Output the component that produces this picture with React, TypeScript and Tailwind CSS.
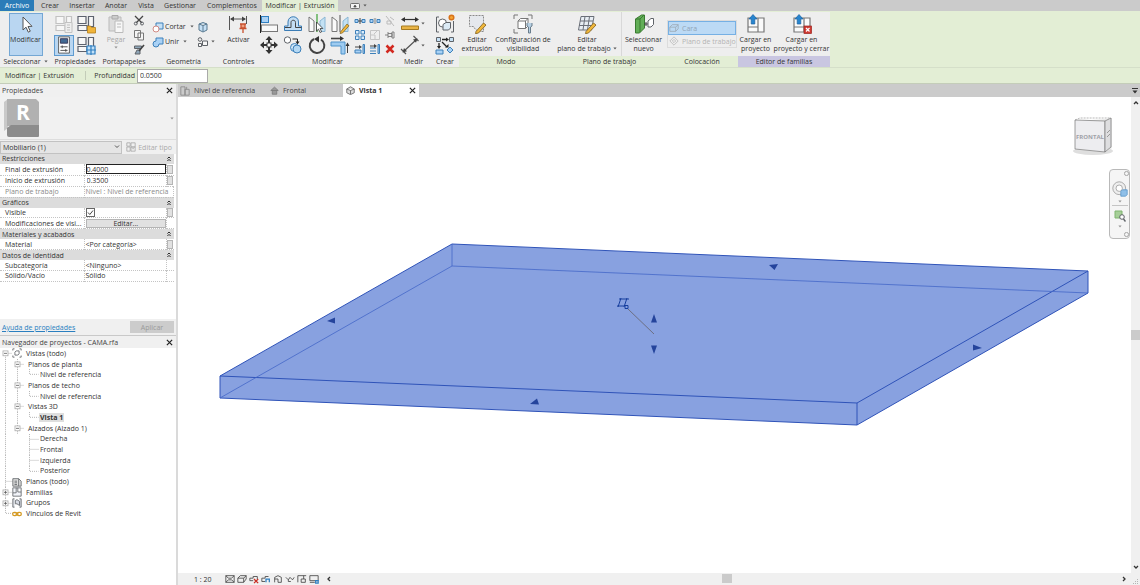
import { ReactNode } from "react";
import clsx from "clsx";

type Props = {
  children?: ReactNode;
  className?: string;
};

/* ---------- shared bits ---------- */

function Big({ children, className = "size-5" }: Props) {
  return (
    <svg viewBox="0 0 20 20" className={clsx("shrink-0", className)} fill="none" stroke="#5f6368">
      {children}
    </svg>
  );
}

function Small({ children, className = "size-3" }: Props) {
  return (
    <svg viewBox="0 0 12 12" className={clsx("shrink-0", className)} fill="none" stroke="#5f6368">
      {children}
    </svg>
  );
}

function Caret({ className }: { className?: string }) {
  return (
    <svg viewBox="0 0 5 3" className={clsx("h-[3px] w-[4px] shrink-0", className)} fill="#555">
      <path d="M0.5 0.3h4L2.5 2.8z" />
    </svg>
  );
}

function Close({ label }: { label: string }) {
  return (
    <button aria-label={label} className="flex size-[9px] items-center justify-center">
      <svg viewBox="0 0 8 8" className="size-[7px]" stroke="#222" strokeWidth="1.4">
        <path d="M1 1l6 6M7 1L1 7" />
      </svg>
    </button>
  );
}

function IconButton({ label, children, className }: Props & { label: string }) {
  return (
    <button aria-label={label} className={clsx("flex items-center justify-center", className)}>
      {children}
    </button>
  );
}

function LabelButton({ children, icon, className }: Props & { icon: ReactNode }) {
  return (
    <button className={clsx("flex flex-col items-center pt-[2px] leading-[9px] whitespace-nowrap", className)}>
      <span className="mb-[1px]">{icon}</span>
      {children}
    </button>
  );
}

function Panel({
  title,
  width,
  tone = "bg-[#eeeeee]",
  children,
  arrow,
}: {
  title: string;
  width: string;
  tone?: string;
  children: ReactNode;
  arrow?: boolean;
}) {
  return (
    <section aria-label={title} className={clsx("flex shrink-0 flex-col bg-[#eeeeee]", width)}>
      <div className="flex h-[45px] justify-center">{children}</div>
      <h2 className={clsx("flex h-[11px] items-center justify-center gap-[3px] whitespace-nowrap", tone)}>
        {title}
        {arrow ? <Caret /> : null}
      </h2>
    </section>
  );
}

/* ---------- ribbon ---------- */

const tabs = [
  { name: "Crear", width: "w-8" },
  { name: "Insertar", width: "w-8" },
  { name: "Anotar", width: "w-9" },
  { name: "Vista", width: "w-6" },
  { name: "Gestionar", width: "w-11" },
  { name: "Complementos", width: "w-[60px]" },
];

function TabBar() {
  return (
    <nav className="flex h-[11px] bg-[#cbcbcb]">
      <button className="w-[34px] bg-[#2b7cb8] text-white">Archivo</button>
      {tabs.map((tab) => (
        <button key={tab.name} className={clsx("whitespace-nowrap", tab.width)}>
          {tab.name}
        </button>
      ))}
      <button className="w-[76px] bg-[#e3eed5] whitespace-nowrap">Modificar | Extrusión</button>
      <button aria-label="Minimizar cinta" className="ml-3 flex items-center gap-[3px]">
        <svg viewBox="0 0 10 6" className="h-[6px] w-[10px]" fill="#f4f4f4" stroke="#555" strokeWidth="0.8">
          <rect x="0.5" y="0.5" width="9" height="5" rx="1" />
          <path d="M3.8 4L5 2l1.2 2z" fill="#333" />
        </svg>
        <Caret />
      </button>
    </nav>
  );
}

function AlignIcon() {
  return (
    <Big>
      <path d="M1.5 1v18" stroke="#222" />
      <rect x="2.5" y="2.5" width="7" height="6" fill="#a9d1f5" stroke="#2f7fc1" />
      <rect x="2.5" y="11" width="16" height="6.5" fill="#f8f8f8" stroke="#777" />
    </Big>
  );
}

function OffsetIcon() {
  return (
    <Big>
      <path d="M1.500 16.500h17v-4.500h-3V8c0-7-10.500-7-10.500 0v4H1.500z" fill="#c3def5" stroke="#3b7cb5" />
      <path d="M2 13.500h6V8.500c0-3 4.500-3 4.500 0v5h6" stroke="#444" />
    </Big>
  );
}

function MirrorIcon({ pencil }: { pencil?: boolean }) {
  return (
    <Big>
      <path d="M2 3l5 4v10.500H2z" fill="#fafafa" stroke="#777" />
      <path d="M18 3l-5 4v10.500h5z" fill="#c3e1f3" stroke="#8ab6d4" />
      {pencil ? (
        <>
          <path d="M10 1v17" stroke="#555" />
          <path d="M10.500 18l6.500-8 2 1.800-6.500 7.200-2.500.500z" fill="#f0b73b" stroke="#7d5d1c" strokeWidth=".7" />
        </>
      ) : (
        <>
          <path d="M10 0v18" stroke="#49a843" strokeWidth="1.300" />
          <path d="M9.500 8v9l2-1.800 1.600 3.300 1.500-.700-1.500-3.300h2.800z" fill="#fff" stroke="#333" strokeWidth=".8" />
        </>
      )}
    </Big>
  );
}

function MoveIcon() {
  return (
    <Big>
      <path
        d="M10 1l3.500 4H11v4h4V6.500l4 3.500-4 3.500V11h-4v4h2.500L10 19l-3.500-4H9v-4H5v2.500L1 10l4-3.500V9h4V5H6.500z"
        fill="#333"
        stroke="none"
      />
      <rect x="8" y="8" width="4" height="4" fill="#fff" stroke="#333" />
    </Big>
  );
}

function CopyIcon() {
  return (
    <Big>
      <circle cx="4.500" cy="5" r="3.200" fill="#fff" />
      <path d="M9.500 4h5v3" stroke="#222" />
      <path d="M12.500 6.500h4l-2 3z" fill="#222" stroke="none" />
      <circle cx="11.500" cy="12.500" r="4" fill="#cfe5f7" stroke="#3d80ba" />
      <circle cx="14" cy="14" r="4" fill="#b4d8f4" stroke="#3d80ba" />
    </Big>
  );
}

function RotateIcon() {
  return (
    <Big>
      <path d="M7 4a7.300 7.300 0 1 0 7 .500" stroke="#444" strokeWidth="2" />
      <path d="M12 1l-5 3 5 3.500z" fill="#333" stroke="none" />
    </Big>
  );
}

function TrimIcon() {
  return (
    <Big>
      <path d="M1 3.500h10" stroke="#444" strokeWidth="1.600" />
      <path d="M10 1l4 2.500-4 2.500z" fill="#333" stroke="none" />
      <path d="M1 7h14v12h-4v-8H1z" fill="#9ecbf0" stroke="#4d92ca" />
      <path d="M17.500 18v-8" stroke="#444" />
      <path d="M15.500 11l2-3.500 2 3.500z" fill="#333" stroke="none" />
    </Big>
  );
}

const smallTools = [
  {
    label: "Dividir elemento",
    art: (
      <>
        <path d="M1 4.500h3v3H1zM8 4.500h3v3H8z" fill="#a9d1f5" stroke="#3d80ba" />
        <path d="M4 6h4M6 3v6" stroke="#444" />
      </>
    ),
  },
  {
    label: "Dividir con separación",
    art: (
      <>
        <path d="M1 4.500h3v3H1zM8 4.500h3v3H8z" fill="#a9d1f5" stroke="#3d80ba" />
        <path d="M5.300 3v6M6.700 3v6" stroke="#888" strokeWidth=".7" />
      </>
    ),
  },
  {
    label: "Desbloquear",
    art: <path d="M2 1l8 10M3 6h4v3H3zM6 2l4 3" stroke="#bbb" />,
  },
  {
    label: "Matriz",
    art: (
      <path d="M1.500 1.500h3.500v3.500H1.500zM7 1.500h3.500v3.500H7zM1.500 7h3.500v3.500H1.500zM7 7h3.500v3.500H7z" fill="#dceefc" stroke="#3d80ba" />
    ),
  },
  {
    label: "Escala",
    art: <path d="M1.500 1.500h9v9h-9zM1.500 6h4.500v4.500M5 5l3-3" stroke="#c4c4c4" />,
  },
  {
    label: "Bloquear",
    art: <path d="M1 6h3M4 3v6M4 4.500h4v3H4M8 3v6h2V3z" stroke="#777" strokeWidth=".9" />,
  },
  {
    label: "Recortar un elemento",
    art: (
      <>
        <path d="M1 7h6v3H1zM9 1.500h1.500v9H9z" fill="#a9d1f5" stroke="#3d80ba" />
        <path d="M1 4h5" stroke="#444" />
        <path d="M5 2l3 2-3 2z" fill="#444" stroke="none" />
      </>
    ),
  },
  {
    label: "Recortar varios elementos",
    art: (
      <>
        <path d="M1 5h6M1 8h6M1 10.500h6M9 1.500h1.500v9H9z" fill="#a9d1f5" stroke="#3d80ba" />
        <path d="M1 3h5" stroke="#444" />
        <path d="M5 1l3 2-3 2z" fill="#444" stroke="none" />
      </>
    ),
  },
  {
    label: "Suprimir",
    art: <path d="M2.500 2.500l7 7M9.500 2.500l-7 7" stroke="#d2281f" strokeWidth="2.500" />,
  },
];

function ModifyPanel() {
  return (
    <Panel title="Modificar" width="w-[137px]">
      <div className="grid grid-cols-4 grid-rows-2 gap-x-1 pt-[1px]">
        <IconButton label="Alinear"><AlignIcon /></IconButton>
        <IconButton label="Desfase"><OffsetIcon /></IconButton>
        <IconButton label="Reflejar - Seleccionar eje"><MirrorIcon /></IconButton>
        <IconButton label="Reflejar - Dibujar eje"><MirrorIcon pencil /></IconButton>
        <IconButton label="Desplazar"><MoveIcon /></IconButton>
        <IconButton label="Copiar"><CopyIcon /></IconButton>
        <IconButton label="Rotar"><RotateIcon /></IconButton>
        <IconButton label="Recortar"><TrimIcon /></IconButton>
      </div>
      <div className="ml-1 grid grid-cols-3 grid-rows-3 gap-x-[3px] pt-[2px]">
        {smallTools.map((tool) => (
          <IconButton key={tool.label} label={tool.label}>
            <Small>{tool.art}</Small>
          </IconButton>
        ))}
      </div>
    </Panel>
  );
}

function FamilyTypesIcon({ variant }: { variant: "gray" | "folder" | "globe" }) {
  const line = variant === "gray" ? "#c2c2c2" : "#5d626e";
  return (
    <Big>
      <path d="M2 2.500h8v7H2zM12.500 2.500h5v10h-5zM2 11.500h9v5H2z" fill="#f7f7f7" stroke={line} strokeWidth="1.200" />
      {variant === "gray" && <path d="M11 8.500h7v10h-7zM13 11h3M13 13.500h3M13 16h3" fill="#eee" stroke={line} />}
      {variant === "folder" && <path d="M11.500 12h3l1 1.500h4v5.500h-8z" fill="#f0b43a" stroke="#b47f1a" strokeWidth=".8" />}
      {variant === "globe" && (
        <path d="M11 11h8v8h-8zM15 10v10M10 15h10" fill="#c2e0f7" stroke="#2f7fc1" strokeWidth="1.200" />
      )}
    </Big>
  );
}

function PencilPath() {
  return <path d="M9 17.500l7.500-8.500 2.500 2-7.500 8-3 .700z" fill="#f0b73b" stroke="#7d5d1c" strokeWidth=".8" />;
}

function LoadIcon({ close }: { close?: boolean }) {
  return (
    <Big>
      <path d="M2 4h16v14H2z" fill="#fafafa" stroke="#777" strokeWidth="1.200" />
      <path d="M12 4v9H2M12 13v5" stroke="#777" strokeWidth="1.200" />
      <path d="M7 0.500l4 4.500H8.800v5H5.200V5H3z" fill="#2785cf" stroke="#1b62a0" strokeWidth=".7" />
      {close && (
        <>
          <rect x="12" y="12" width="7.500" height="7.500" fill="#cf3a32" stroke="#9a221c" strokeWidth=".7" />
          <path d="M14 14l3.500 3.500M17.500 14L14 17.500" stroke="#fff" strokeWidth="1.200" />
        </>
      )}
    </Big>
  );
}

function Ribbon() {
  return (
    <div className="flex h-[57px] border-b border-[#d5dfc9] bg-[#e3eed5] pt-[1px]">
      <Panel title="Seleccionar" width="w-[51px]" arrow>
        <button className="mt-[1px] flex h-[43px] w-[34px] flex-col items-center border border-[#74a7d4] bg-[#b9d6f1]">
          <Big className="mt-[1px] size-[20px]">
            <path d="M7 2v13l3-2.800 2.300 5 2-1-2.300-4.700 4-.200z" fill="#fff" stroke="#555" />
          </Big>
          Modificar
        </button>
      </Panel>
      <Panel title="Propiedades" width="w-12">
        <div className="grid grid-cols-2 grid-rows-2 gap-x-[2px] pt-[1px]">
          <IconButton label="Categorías"><FamilyTypesIcon variant="gray" /></IconButton>
          <IconButton label="Tipos de familia"><FamilyTypesIcon variant="folder" /></IconButton>
          <IconButton label="Propiedades" className="border border-[#5f9bd0] bg-[#b9d6f1]">
            <Big className="size-[18px]">
              <path d="M4 1h12v18H4z" fill="#fff" stroke="#555" />
              <path d="M6 3h8v5H6z" fill="#426a94" stroke="#335" />
              <path d="M6 12h8M6 16h8M8 10.500v3M12 14.500v3" stroke="#444" />
            </Big>
          </IconButton>
          <IconButton label="Parámetros"><FamilyTypesIcon variant="globe" /></IconButton>
        </div>
      </Panel>
      <Panel title="Portapapeles" width="w-[50px]">
        <LabelButton
          className="w-[26px] text-[#a6a6a6]"
          icon={
            <Big>
              <path d="M3 3h12v14H3z" fill="#ddd" stroke="#bbb" />
              <path d="M6 1.500h6v3.500H6z" fill="#ccc" stroke="#aaa" />
              <path d="M9 7h8v11.500H9zM11 10h4M11 13h4" fill="#f7f7f7" stroke="#bbb" />
            </Big>
          }
        >
          Pegar
          <Caret className="mt-[2px] opacity-60" />
        </LabelButton>
        <div className="grid grid-rows-3 pt-[1px] pl-1">
          <IconButton label="Cortar al portapapeles">
            <Small>
              <path d="M2 2l7 7M10 2L3 9" stroke="#444" strokeWidth="1.300" />
              <circle cx="2.800" cy="9.500" r="1.500" />
              <circle cx="9" cy="9.500" r="1.500" />
            </Small>
          </IconButton>
          <IconButton label="Copiar al portapapeles">
            <Small>
              <path d="M1.500 1.500h6v7h-6zM5 4h5.500v7H5z" fill="#f4f4f4" stroke="#777" />
            </Small>
          </IconButton>
          <IconButton label="Igualar tipo">
            <Small>
              <path d="M1.500 3h7v2.500h-7zM4 7h3v4H2z" fill="#8fa6b8" />
              <path d="M11 2L6 8" stroke="#444" strokeWidth="1.600" />
            </Small>
          </IconButton>
        </div>
      </Panel>
      <Panel title="Geometría" width="w-[69px]">
        <div className="mt-[7px] grid h-[30px] grid-cols-[45px_18px] grid-rows-2 self-start">
          <button className="flex items-center gap-px">
            <Small>
              <path d="M4 2h7v6H4z" fill="#c5e0f5" stroke="#3d80ba" />
              <circle cx="4" cy="8" r="3" fill="#fff" stroke="#d18a83" />
            </Small>
            Cortar
            <Caret className="ml-[3px]" />
          </button>
          <button aria-label="Desmoldear" className="flex items-center">
            <Small>
              <path d="M2 3l4-1.500 4 1.500v6l-4 2-4-2zM6 4.500v6M2 3l4 1.500L10 3" fill="#c5e0f5" stroke="#58788f" />
            </Small>
          </button>
          <button className="flex items-center gap-px">
            <Small>
              <path d="M4 2h7v6H7a3 3 0 1 1-3-3z" fill="#a9d1f5" stroke="#3d80ba" />
            </Small>
            Unir
            <Caret className="ml-[3px]" />
          </button>
          <button aria-label="Pintura" className="flex items-center">
            <Small>
              <circle cx="3" cy="3.500" r="1.800" />
              <path d="M5.500 5h5v4.500h-5zM1.500 7.500h3v3h-3z" fill="#f7f7f7" />
            </Small>
            <Caret className="ml-[2px]" />
          </button>
        </div>
      </Panel>
      <Panel title="Controles" width="w-[41px]">
        <LabelButton
          icon={
            <Big>
              <path d="M1.500 2v14M18.500 2v8M3 5h14" stroke="#555" />
              <path d="M6 2.500L2 5l4 2.500zM14 2.500L18 5l-4 2.500z" fill="#444" stroke="none" />
              <path d="M12 10h6M13 10v4h4v-4M11.500 14.500h7M15 15v4" fill="#f0a080" stroke="#c8502e" strokeWidth="1.300" />
            </Big>
          }
        >
          Activar
        </LabelButton>
      </Panel>
      <ModifyPanel />
      <Panel title="Medir" width="w-[35px]">
        <div className="grid grid-cols-[22px_7px] grid-rows-2 items-center pt-[1px]">
          <IconButton label="Medir">
            <Big>
              <path d="M2 5.500h16" stroke="#333" strokeWidth="1.200" />
              <path d="M5 3L1 5.500 5 8zM15 3l4 2.500L15 8z" fill="#333" stroke="none" />
              <path d="M1.500 12h17v3.500h-17z" fill="#e9b445" stroke="#a57a20" />
            </Big>
          </IconButton>
          <Caret />
          <IconButton label="Cota alineada">
            <Big>
              <path d="M3 17L17 4M1 14l5 5M13.500 1l5 5" stroke="#555" strokeWidth="1.200" />
              <path d="M2.500 17.500l1.500-4.500 3 3.300zM17.500 3.500l-4.500 1 3 3.300z" fill="#444" stroke="none" />
            </Big>
          </IconButton>
          <Caret />
        </div>
      </Panel>
      <Panel title="Crear" width="w-7">
        <div className="grid grid-rows-2 pt-[1px]">
          <IconButton label="Crear grupo">
            <Big>
              <path d="M4 3H1.500v15H4M16 18h2.500V7" />
              <circle cx="7.500" cy="9" r="4" fill="#fff" />
              <path d="M8 10.500l3-2h4.500v5.500l-2 2H8z" fill="#dcebf6" />
              <circle cx="16.500" cy="3.500" r="2.300" fill="#f3a534" stroke="#d87219" strokeWidth="1.500" />
            </Big>
          </IconButton>
          <IconButton label="Crear similar">
            <Big>
              <path d="M1.500 2.500h4v4h-4zM14.500 2.500h4v4h-4z" fill="#c5e0f5" />
              <path d="M7 4.500h5M4 8v4M7 7l5 5" stroke="#222" strokeWidth="1.300" />
              <path d="M11 2.500l3 2-3 2zM2 11h4l-2 3zM10 12.500h3.500V9z" fill="#222" stroke="none" />
              <path d="M1 15h7v4H1zM15 12l3 3-3 3-3-3z" fill="#a9d1f5" stroke="#3d80ba" />
            </Big>
          </IconButton>
        </div>
      </Panel>
      <Panel title="Modo" width="w-[94px]" tone="bg-[#e3eed5]">
        <LabelButton
          className="w-[34px]"
          icon={
            <Big>
              <path d="M2.500 1.500h14v16h-5l-3-2-2-3h-4z" fill="#e5e8ed" stroke="#8a8a8a" strokeDasharray="2 1" />
              <PencilPath />
            </Big>
          }
        >
          <span>Editar</span>
          <span>extrusión</span>
        </LabelButton>
        <LabelButton
          className="w-[58px]"
          icon={
            <Big>
              <path d="M1 5V1h4M15 1h4v4M1 15v4h4" stroke="#777" />
              <path d="M5 7l2.500-2.500H15V12l-2.500 2.500H5zM5 7h7.500v7.500M12.500 7L15 4.500" fill="#fff" stroke="#777" />
              <path d="M14 9v3l1.500 1V19h2v-6L19 12V9" fill="#b7d0e3" stroke="#687c8b" />
            </Big>
          }
        >
          <span>Configuración de</span>
          <span>visibilidad</span>
        </LabelButton>
      </Panel>
      <Panel title="Plano de trabajo" width="w-[113px]" tone="bg-[#e3eed5]">
        <LabelButton
          className="w-[68px] border-r border-[#d8d8d8]"
          icon={
            <Big>
              <path d="M4 2.500h13L14.500 16H1.500zM8 2.500L6 16M12.500 2.500l-2 13.500M3 7h13M2 11.500h13" fill="#e8eef4" stroke="#6a6f78" />
              <PencilPath />
            </Big>
          }
        >
          <span>Editar</span>
          <span className="flex items-center gap-[2px]">
            plano de trabajo
            <Caret />
          </span>
        </LabelButton>
        <LabelButton
          className="w-11"
          icon={
            <Big>
              <path d="M1.500 5l6-4h3v13l-5 5h-4zM1.500 5h4.500v13M6 5l4-4" fill="#62ae57" stroke="#397b31" />
              <path d="M10 10h4M12 8v4" stroke="#444" />
              <path d="M14 7l3-2.500h2.500v6L17 13h-3z" fill="#fff" />
            </Big>
          }
        >
          <span>Seleccionar</span>
          <span>nuevo</span>
        </LabelButton>
      </Panel>
      <Panel title="Colocación" width="w-[72px]" tone="bg-[#e3eed5]">
        <div className="mt-[8px] flex h-[28px] w-[70px] flex-col border border-[#dcdcdc] text-[#b4b4b4]">
          <button className="flex flex-1 items-center gap-[3px] border border-[#76b0e4] bg-[#bcdaf5] text-[#91a4b5]">
            <Small className="size-[10px]">
              <path d="M1 5l3-3h7v5l-3 3H1zM1 5h7v5M8 5l3-3" stroke="#9caab6" />
            </Small>
            Cara
          </button>
          <button className="flex flex-1 items-center gap-[3px] pl-px whitespace-nowrap">
            <Small className="size-[10px]">
              <path d="M6 1l5 5-5 5-5-5zM6 4l2 2-2 2-2-2z" stroke="#bbb" />
            </Small>
            Plano de trabajo
          </button>
        </div>
      </Panel>
      <Panel title="Editor de familias" width="w-[92px]" tone="bg-[#c9c6e1]">
        <LabelButton className="w-[35px]" icon={<LoadIcon />}>
          <span>Cargar en</span>
          <span>proyecto</span>
        </LabelButton>
        <LabelButton className="w-[57px]" icon={<LoadIcon close />}>
          <span>Cargar en</span>
          <span>proyecto y cerrar</span>
        </LabelButton>
      </Panel>
    </div>
  );
}

function OptionsBar() {
  return (
    <div className="flex h-4 items-center border-b border-[#c4cdb9] bg-[#e3eed5]">
      <span className="w-[86px] border-r border-[#c3ccb8] pl-[5px]">Modificar | Extrusión</span>
      <label htmlFor="depth" className="w-[51px] pr-[2px] text-right">
        Profundidad
      </label>
      <input id="depth" defaultValue="0.0500" className="h-[14px] w-[71px] border border-[#aaa] bg-white px-[2px]" />
    </div>
  );
}

/* ---------- properties palette ---------- */

function GroupRow({ name }: { name: string }) {
  return (
    <tr className="bg-[#dcdcdc]">
      <th colSpan={3} scope="rowgroup" className="p-0 pl-[2px] text-left font-normal">
        <div className="flex items-center justify-between pr-[3px]">
          {name}
          <svg viewBox="0 0 5 7" className="h-[6px] w-[4px]" fill="none" stroke="#222" strokeWidth="1.200">
            <path d="M0.500 3L2.500 1l2 2M0.500 6l2-2 2 2" />
          </svg>
        </div>
      </th>
    </tr>
  );
}

function PropRow({ name, children, more, muted }: Props & { name: string; more?: boolean; muted?: boolean }) {
  return (
    <tr className={clsx("border-b border-dotted border-[#c4c4c4]", muted && "text-[#8a8a8a]")}>
      <th scope="row" className="border-r border-dotted border-[#c4c4c4] p-0 pl-[5px] text-left font-normal">
        {name}
      </th>
      <td colSpan={muted ? 2 : 1} className="border-r border-dotted border-[#c4c4c4] p-0 pl-px whitespace-nowrap">
        {children}
      </td>
      {muted ? null : (
        <td className="p-0">
          {more ? <button aria-label={"Asociar " + name} className="block h-[9px] w-[6px] border border-[#b5b5b5] bg-[#e1e1e1]" /> : null}
        </td>
      )}
    </tr>
  );
}

function PropertiesPalette() {
  return (
    <section aria-label="Propiedades" className="bg-[#f0f0f0]">
      <header className="flex h-[13px] items-center justify-between px-[2px] text-[#444]">
        Propiedades
        <Close label="Cerrar propiedades" />
      </header>
      <div className="flex h-[43px] items-center justify-between border-b border-[#ddd] bg-[#f1f1f1] pr-[2px] pl-1">
        <svg viewBox="0 0 36 40" className="h-10 w-9">
          <path d="M0 4L4 1v29l-4 3z" fill="#c9c9c9" />
          <path d="M3 1h29l3 3v24H3z" fill="#b1b1b1" />
          <path d="M3 30l4-3h28v11a1 1 0 0 1-1 1H5a2 2 0 0 1-2-2z" fill="#8c8c8c" />
          <text x="19" y="22" textAnchor="middle" fontSize="21" fontWeight="700" fill="#fff">
            R
          </text>
        </svg>
        <Caret className="opacity-60" />
      </div>
      <div className="flex h-[14px] items-center justify-between pr-[4px]">
        <div className="relative flex items-center">
          <select aria-label="Filtro" className="h-[13px] w-[122px] appearance-none border border-[#c2c2c2] bg-[#e5e5e5] pl-[2px]">
            <option>Mobiliario (1)</option>
          </select>
          <svg viewBox="0 0 6 4" className="pointer-events-none absolute right-[2px] h-1 w-[6px]" fill="none" stroke="#555">
            <path d="M1 0.500l2 2 2-2" />
          </svg>
        </div>
        <button className="flex items-center gap-[2px] whitespace-nowrap text-[#aaa]">
          <Small className="size-[10px]">
            <path d="M1 1h4v4H1zM6 1h5v5H6zM1 6h4v5H1zM6 6h5v5H6zM7.500 8h2" stroke="#aaa" />
          </Small>
          Editar tipo
        </button>
      </div>
      <div className="h-[165px] bg-white pr-[2px]">
        <table className="h-[128px] w-full table-fixed border-collapse leading-[9px]">
          <colgroup>
            <col className="w-[84px]" />
            <col />
            <col className="w-[7px]" />
          </colgroup>
          <tbody>
            <GroupRow name="Restricciones" />
            <PropRow name="Final de extrusión" more>
              <input aria-label="Final de extrusión" defaultValue="0.4000" className="block h-[10px] w-full border border-[#222] leading-[8px]" />
            </PropRow>
            <PropRow name="Inicio de extrusión" more>
              <input aria-label="Inicio de extrusión" defaultValue="0.3500" className="block h-[9px] w-full pl-px" />
            </PropRow>
            <PropRow name="Plano de trabajo" muted>
              Nivel : Nivel de referencia
            </PropRow>
            <GroupRow name="Gráficos" />
            <PropRow name="Visible" more>
              <label className="relative flex h-[9px] w-[9px] items-center">
                <input type="checkbox" defaultChecked aria-label="Visible" className="peer size-[9px] appearance-none border border-[#666] bg-white" />
                <svg viewBox="0 0 9 9" className="pointer-events-none absolute size-[9px] opacity-0 peer-checked:opacity-100" fill="none" stroke="#444">
                  <path d="M2 4.500l1.800 2L7 2.500" />
                </svg>
              </label>
            </PropRow>
            <PropRow name="Modificaciones de visi...">
              <button className="block h-[9px] w-full border border-[#b5b5b5] bg-[#e1e1e1] leading-[7px]">Editar...</button>
            </PropRow>
            <GroupRow name="Materiales y acabados" />
            <PropRow name="Material" more>&lt;Por categoría&gt;</PropRow>
            <GroupRow name="Datos de identidad" />
            <PropRow name="Subcategoría">&lt;Ninguno&gt;</PropRow>
            <PropRow name="Sólido/Vacío">Sólido</PropRow>
          </tbody>
        </table>
      </div>
      <footer className="flex h-[17px] items-center justify-between border-b border-[#c9c9c9] px-[2px]">
        <a href="#ayuda" className="text-[#2a7fc0] underline">
          Ayuda de propiedades
        </a>
        <button disabled className="h-3 w-11 bg-[#cccccc] text-[#9a9a9a]">
          Aplicar
        </button>
      </footer>
    </section>
  );
}

/* ---------- project browser ---------- */

type Guide = "line" | "tee" | "end" | "open" | "first" | "closed" | "blank";

const guidePaths: Record<Guide, string> = {
  line: "M5.500 0v11",
  tee: "M5.500 0v11M5.500 5.500h9",
  end: "M5.500 0v5.500h9",
  open: "M5.500 0v11M5.500 5.500h6.500",
  first: "M5.500 5.500v5.500M5.500 5.500h6.500",
  closed: "M5.500 0v11M5.500 5.500h6.500",
  blank: "",
};

const tree: { name: string; guides: Guide[]; icon?: "views" | "sheet" | "family" | "group" | "link"; active?: boolean }[] = [
  { name: "Vistas (todo)", guides: ["first"], icon: "views" },
  { name: "Planos de planta", guides: ["line", "open"] },
  { name: "Nivel de referencia", guides: ["line", "line", "end"] },
  { name: "Planos de techo", guides: ["line", "open"] },
  { name: "Nivel de referencia", guides: ["line", "line", "end"] },
  { name: "Vistas 3D", guides: ["line", "open"] },
  { name: "Vista 1", guides: ["line", "line", "end"], active: true },
  { name: "Alzados (Alzado 1)", guides: ["line", "open"] },
  { name: "Derecha", guides: ["line", "blank", "tee"] },
  { name: "Frontal", guides: ["line", "blank", "tee"] },
  { name: "Izquierda", guides: ["line", "blank", "tee"] },
  { name: "Posterior", guides: ["line", "blank", "end"] },
  { name: "Planos (todo)", guides: ["tee"], icon: "sheet" },
  { name: "Familias", guides: ["closed"], icon: "family" },
  { name: "Grupos", guides: ["closed"], icon: "group" },
  { name: "Vínculos de Revit", guides: ["end"], icon: "link" },
];

const treeIcons = {
  views: (
    <>
      <path d="M3 1H1v2M1 9v2h2M9 1h2v2M11 9v2H9" />
      <path d="M3.500 5L5 3.500h3.500V7L7 8.500H3.500z" />
    </>
  ),
  sheet: <path d="M1 2h7l3 3v6H1zM8 2v9M3 5h3M3 7h3M3 9h3" fill="#ddd" />,
  family: <path d="M1 1h10v10H1zM5 1v6H1M7 1v5h4" fill="#f2f4fa" />,
  group: <path d="M3 1H1v10h2M9 1h2v10H9M4 3l2-1 3 2v5L6 7H4z" fill="#d7dbe4" />,
  link: (
    <g stroke="#d59a22" strokeWidth="1.500">
      <rect x="0.800" y="4" width="5" height="4" rx="2" />
      <rect x="6.200" y="4" width="5" height="4" rx="2" />
      <path d="M4 6h4" />
    </g>
  ),
};

function GuideCell({ guide }: { guide: Guide }) {
  const boxed = guide === "open" || guide === "first" || guide === "closed";
  return (
    <svg viewBox="0 0 12 11" preserveAspectRatio="none" className="h-full w-3 shrink-0 overflow-visible" fill="none">
      <path d={guidePaths[guide]} stroke="#b5b5b5" strokeDasharray="1 1" />
      {boxed ? (
        <>
          <rect x="3" y="3" width="5" height="5" fill="#fff" stroke="#aaa" strokeWidth="0.800" />
          <path d={guide === "closed" ? "M4 5.500h3M5.500 4v3" : "M4 5.500h3"} stroke="#555" strokeWidth="0.800" />
        </>
      ) : null}
    </svg>
  );
}

function ProjectBrowser() {
  return (
    <section aria-label="Navegador de proyectos" className="flex flex-1 flex-col">
      <header className="flex h-3 items-center justify-between bg-[#f0f0f0] px-[2px] text-[#444]">
        Navegador de proyectos - CAMA.rfa
        <Close label="Cerrar navegador" />
      </header>
      <ul className="grid h-[171px] auto-rows-fr bg-white">
        {tree.map((item, index) => (
          <li key={index} className="flex items-center">
            {item.guides.map((guide, i) => (
              <GuideCell key={i} guide={guide} />
            ))}
            {item.icon ? <Small className="size-[10px]">{treeIcons[item.icon]}</Small> : null}
            <span className={clsx("ml-[3px] px-px whitespace-nowrap", item.active && "bg-[#dedede] font-bold")}>
              {item.name}
            </span>
          </li>
        ))}
      </ul>
    </section>
  );
}

/* ---------- drawing area ---------- */

function DocumentTabs() {
  return (
    <div role="tablist" className="flex h-[13px] items-center bg-[#cbcbcb] text-[#444]">
      <button role="tab" className="flex w-[90px] items-center gap-1 pl-[2px] whitespace-nowrap">
        <Small className="size-[10px]">
          <path d="M1 1h5v10H1zM6 4h5v7H6zM8 1v3" stroke="#888" />
        </Small>
        Nivel de referencia
      </button>
      <button role="tab" className="flex w-[75px] items-center gap-1 pl-[2px]">
        <Small className="size-[9px]">
          <path d="M1 6l5-4.500L11 6zM3 6v5h6V6" fill="#999" stroke="#777" />
        </Small>
        Frontal
      </button>
      <div className="flex h-full w-[76px] items-center justify-between bg-white pr-[2px] pl-[3px]">
        <button role="tab" aria-selected className="flex items-center gap-1 font-bold text-[#333]">
          <Small className="size-[9px]">
            <path d="M1 4l5-3 5 3v5l-5 2.500L1 9zM1 4l5 2 5-2M6 6v5" fill="#ddd" stroke="#555" />
          </Small>
          Vista 1
        </button>
        <Close label="Cerrar vista" />
      </div>
      <button aria-label="Lista de vistas" className="mr-[2px] ml-auto">
        <svg viewBox="0 0 6 6" className="size-[6px]" fill="#333">
          <path d="M0 0h6v1H0zM0.500 2.500h5L3 5.500z" />
        </svg>
      </button>
    </div>
  );
}

// Extruded slab, drawn in window units
function Model() {
  return (
    <svg viewBox="178 97 953 476" className="size-full" fill="none" stroke="#2f53b8" strokeWidth="1">
      <path d="M452 244L1088 271V293L857 425L220 398V376Z" fill="#88a1e0" />
      <path d="M220 376L857 403L1088 271M857 403V425" />
      <path d="M452 244V266L1088 293M452 266L220 398" stroke="#4467c8" strokeWidth="0.800" />
      <g fill="#25449c" stroke="none">
        <path d="M769 265l9-1-3.500 6zM327 321l8-3.500v6zM982 348l-9-3.500v6zM530 404l7-5.500 2 6zM654 314l3 8.500h-6zM654 354l3-8.500h-6z" />
      </g>
      <path d="M628 309L654 334" stroke="#6c6f83" />
      <path d="M621 298l-3 9M627 298l-3 9M619 299h10M617 306h7M625 305.500h3v3h-3z" stroke="#173f9e" />
    </svg>
  );
}

function ViewCube() {
  return (
    <svg viewBox="0 0 46 44" className="h-11 w-[46px]" role="img" aria-label="ViewCube">
      <ellipse cx="23" cy="35" rx="20" ry="4" fill="#dedede" />
      <path d="M5 5l31-2 6-1v30l-6 4L5 34z" fill="#e9e9e9" />
      <path d="M5 4l30 1v31L5 33z" fill="#ededf0" stroke="#777" strokeWidth="0.700" />
      <path d="M35 5l6-3v29l-6 5z" fill="#dedee0" stroke="#777" strokeWidth="0.700" />
      <path d="M5 4l5-2L41 2" fill="none" stroke="#999" strokeWidth="0.700" strokeDasharray="2 1" />
      <path d="M37 17l3-3M37 21l3-3" stroke="#999" />
      <text x="20" y="23" textAnchor="middle" fontSize="6" fontWeight="700" fill="#9fa1a8">
        FRONTAL
      </text>
    </svg>
  );
}

function NavigationBar() {
  return (
    <div className="flex h-[70px] w-[21px] flex-col items-center rounded border border-[#b9b9b9] bg-[#f5f5f5] pt-[1px]">
      <Small className="size-[5px] self-end">
        <circle cx="6" cy="6" r="5" strokeWidth="2" stroke="#999" />
      </Small>
      <IconButton label="Rueda de navegación" className="mt-[5px]">
        <Big className="size-[16px]">
          <circle cx="9" cy="9" r="8" fill="#eee" stroke="#999" />
          <circle cx="9" cy="9" r="4" fill="#fff" stroke="#999" />
          <path d="M11 13l2-2h6v6l-2 2h-6z" fill="#8fbfe8" stroke="#5b95c8" />
        </Big>
      </IconButton>
      <Caret className="mt-[3px] opacity-60" />
      <hr className="mt-[2px] mb-[4px] w-4 border-[#c5c5c5]" />
      <IconButton label="Zoom de región">
        <Small>
          <path d="M1 1h7v7H1z" fill="#a6cf98" stroke="#7fb56f" />
          <circle cx="8" cy="7" r="2.300" fill="#fff" />
          <path d="M9.500 9l2 2.500" strokeWidth="1.400" />
        </Small>
      </IconButton>
      <Caret className="mt-[3px] opacity-60" />
      <Small className="mt-auto mb-[1px] size-[5px] self-end">
        <circle cx="6" cy="6" r="5" strokeWidth="2" stroke="#999" />
      </Small>
    </div>
  );
}

function Chevron({ d }: { d: string }) {
  return (
    <svg viewBox="0 0 6 6" className="size-[6px]" fill="none" stroke="#333" strokeWidth="1.300">
      <path d={d} />
    </svg>
  );
}

const viewControls = [
  { label: "Nivel de detalle", d: "M1 2h10v8H1zM1 2l3 3h4l3-3M1 10l3-3h4l3 3" },
  { label: "Estilo visual", d: "M1 5l3-3h7v4L8 10H1zM1 5h7v5M8 5l3-3" },
  { label: "Camino de sol", d: "M1 8V5h4V3h5v3M1 8h4", mark: "M6 6l5 5M11 6l-5 5", color: "#c92e24" },
  { label: "Sombras", d: "M1 9V5h4V3h4M1 9h4", mark: "M6 10V6h4v4", color: "#2f7fc1" },
  { label: "Región de recorte", d: "M2 10V4l4-2 4 2v6H6V6M2 6h4" },
  { label: "Ocultar temporalmente", d: "M1 4l3 3 2-3 3 3 2-3M4 7v2h3" },
  { label: "Restricciones", d: "M1 10V2h10M5 10V6h5v4zM8 2v4" },
  { label: "Vista preliminar", d: "M1 2h10v6H1zM1 10h6", mark: "M8 8h3v3H8z", color: "#2f7fc1" },
];

function ViewControlBar() {
  return (
    <div className="flex h-3 items-center bg-[#f0f0f0]">
      <button className="w-[46px] pl-4 text-left whitespace-nowrap">1 : 20</button>
      {viewControls.map((control) => (
        <IconButton key={control.label} label={control.label} className="w-[12px]">
          <Small className="size-[10px]">
            <path d={control.d} stroke="#444" />
            {control.mark ? <path d={control.mark} stroke={control.color} strokeWidth="1.500" /> : null}
          </Small>
        </IconButton>
      ))}
      <IconButton label="Desplazar a la izquierda" className="ml-[6px]">
        <Chevron d="M4 1L2 3l2 2" />
      </IconButton>
      <div className="flex flex-1 justify-center self-stretch">
        <div className="mt-px h-[9px] w-[10px] bg-[#cbcbcb]" />
      </div>
      <IconButton label="Desplazar a la derecha" className="mr-[6px]">
        <Chevron d="M2 1l2 2-2 2" />
      </IconButton>
      <svg viewBox="0 0 6 6" className="mr-px size-[6px] self-end" fill="#b5b5b5">
        <path d="M4 0h1v1H4zM4 2h1v1H4zM2 2h1v1H2zM4 4h1v1H4zM2 4h1v1H2zM0 4h1v1H0z" />
      </svg>
    </div>
  );
}

function DrawingArea() {
  return (
    <main className="flex min-w-0 flex-1 flex-col">
      <DocumentTabs />
      <div className="flex min-h-0 flex-1 bg-white">
        <div className="relative min-w-0 flex-1">
          <Model />
          <div className="absolute top-[19px] right-[15px]">
            <ViewCube />
          </div>
          <div className="absolute top-[72px] right-px">
            <NavigationBar />
          </div>
        </div>
        <div className="flex w-[9px] flex-col items-center justify-between bg-[#f0f0f0] py-[3px]">
          <Chevron d="M1 4l2-2 2 2" />
          <div className="h-[10px] w-[9px] bg-[#cbcbcb]" />
          <Chevron d="M1 2l2 2 2-2" />
        </div>
      </div>
      <ViewControlBar />
    </main>
  );
}

export default function App() {
  return (
    <div className="flex h-screen flex-col overflow-hidden bg-white font-['Open_Sans','Noto_Sans',sans-serif] text-[7px] leading-[9px] text-[#333]">
      <TabBar />
      <Ribbon />
      <OptionsBar />
      <div className="flex min-h-0 flex-1">
        <aside className="flex w-[178px] shrink-0 flex-col border-r-2 border-[#dadada] bg-white">
          <PropertiesPalette />
          <ProjectBrowser />
        </aside>
        <DrawingArea />
      </div>
    </div>
  );
}
